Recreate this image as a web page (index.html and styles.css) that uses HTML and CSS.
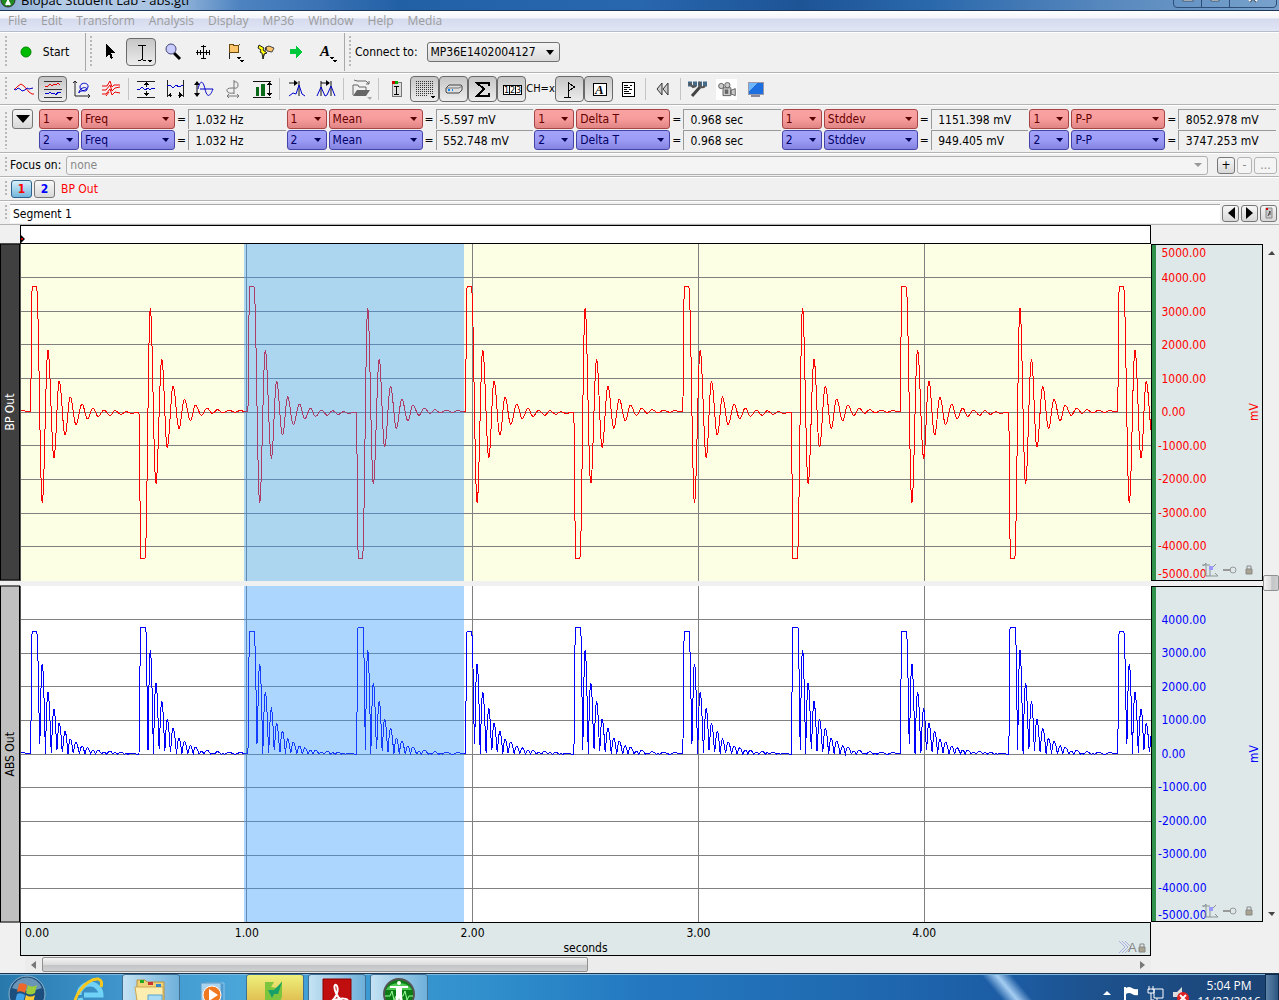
FILE: index.html
```html
<!DOCTYPE html>
<html lang="en">
<head>
    <meta charset="UTF-8">
    <meta name="viewport" content="width=device-width, initial-scale=1.0">
    <title>Biopac Student Lab - abs.gtl</title>
    <link rel="stylesheet" href="styles.css">
</head>
<body>
    <header class="titlebar">
        <svg class="app-icon" width="16" height="16" viewBox="0 0 16 16"><circle cx="8" cy="8" r="7" fill="#1f8a1f" stroke="#333"/><path d="M8 3v10M4 6h8M6 13l2-4 2 4" stroke="#fff" stroke-width="2" fill="none"/></svg>
        <span class="title">Biopac Student Lab - abs.gtl</span>
        <div class="window-buttons">
            <button aria-label="Minimize"><svg width="12" height="12"><rect x="1" y="7" width="10" height="3" fill="#fff" stroke="#456"/></svg></button>
            <button aria-label="Restore"><svg width="12" height="12"><path d="M1 4h8v6H1zM4 4V1h7v6H9" fill="#fff" stroke="#456"/></svg></button>
            <button class="close" aria-label="Close"><svg width="12" height="12"><path d="M2 10l8-8M2 2l8 8" stroke="#456" stroke-width="4"/><path d="M2 10l8-8M2 2l8 8" stroke="#fff" stroke-width="2"/></svg></button>
        </div>
    </header>

    <nav class="menubar">
        <button>File</button>
        <button>Edit</button>
        <button>Transform</button>
        <button>Analysis</button>
        <button>Display</button>
        <button>MP36</button>
        <button>Window</button>
        <button>Help</button>
        <button>Media</button>
    </nav>

    <div class="bar bar-main">
        <span class="grip"></span>
        <button class="start"><svg width="12" height="12"><circle cx="6" cy="6" r="5" fill="#0b0" stroke="#080"/></svg>Start</button>
        <span class="divider"></span>
        <span class="grip"></span>
        <div class="tools">
            <button aria-label="Select"><svg viewBox="0 0 24 24"><path d="M8 4v13l3-3 2 5 2-1-2-5h4z" fill="#000"/></svg></button>
            <button class="on" aria-label="I-beam"><svg viewBox="0 0 24 24"><path d="M9 5h3l1 1 1-1h3M13 6v13M9 20h3l1-1 1 1h3" fill="none" stroke="#000"/><path d="M18 20h5l-2 3z"/></svg></button>
            <button aria-label="Zoom"><svg class="smooth" viewBox="0 0 24 24"><path d="M14 13l6 6" stroke="#000" stroke-width="3"/><circle cx="11" cy="9" r="5" fill="#c8ccff" stroke="#447"/></svg></button>
            <button aria-label="Move"><svg viewBox="0 0 24 24"><path d="M12 5v14M5 12h14M10 6h5M10 18h5M6 10v5M18 10v5M9 10v5M15 10v5" fill="none" stroke="#000"/></svg></button>
            <button aria-label="Event"><svg viewBox="0 0 24 24"><path d="M7 5v14" stroke="#222"/><path d="M7 5l3-1 3 2 4-1-1 8-4-1-3 1-2-1z" fill="#ffc56b" stroke="#6b4a10"/><path d="M14 17h5l-2 3zM17 20h5l-2 3z"/></svg></button>
            <button aria-label="Stimulus event"><svg class="smooth" viewBox="0 0 24 24"><path d="M13 7l3-1 5 2-2 4-5-1z" fill="#ffc56b" stroke="#444"/><path d="M13 7l-3 12" stroke="#222"/><path d="M6 5l5 3-1 2 4 3-3 1-1 5-1-6-2-1 1-2-3-2z" fill="#ff0" stroke="#222"/></svg></button>
            <button aria-label="Next"><svg viewBox="0 0 24 24"><path d="M6 9h6V6l6 6-6 6v-4H6z" fill="#00c83c"/></svg></button>
            <button aria-label="Annotation"><svg viewBox="0 0 24 24"><text x="5" y="16" class="glyph-a">A</text><path d="M14 17h5l-2 3zM17 20h5l-2 3z"/></svg></button>
        </div>
        <span class="divider"></span>
        <span class="grip"></span>
        <label for="device">Connect to:</label>
        <select id="device" class="device"><option>MP36E1402004127</option></select>
    </div>

    <div class="bar bar-icons">
        <span class="grip"></span>
        <div class="tools small">
            <button aria-label="Scope"><svg class="smooth" viewBox="0 0 24 24"><path d="M2 13l4-4 3-2 3 2 5 6 3 2h2" fill="none" stroke="#e00"/><path d="M2 12l2 1 2-2 2 1 2 2 3-1 2-2 2 1 4-1" fill="none" stroke="#00c"/></svg></button>
            <button class="on" aria-label="Chart"><svg viewBox="0 0 24 24"><path d="M3 4h18M3 12h18M3 20h18" stroke="#333"/><path d="M4 9h3l2-2 2 2 2-2 2 1 2-2 2 2" fill="none" stroke="#e00"/><path d="M4 16l3 1 2-2 2 2 2-1 2 2 2-3 3 1" fill="none" stroke="#00c"/></svg></button>
            <button aria-label="X Y plot"><svg class="smooth" viewBox="0 0 24 24"><path d="M5 4v15h15M3 6l2-2 2 2M18 17l2 2-2 2" fill="none" stroke="#222"/><path d="M9 16c-1-3 8-1 9-6s-8-5-8 0 8 5 7 2-8-1-8 4z" fill="none" stroke="#00c"/></svg></button>
            <button aria-label="Overlap"><svg class="smooth" viewBox="0 0 24 24"><path d="M3 9h5l3-5 2 6 2-2h6M3 13h4l4-5 2 6 3-3 5-1M3 17h4l4-5 2 6 3-3 5 1M7 19l3-4" fill="none" stroke="#e00"/></svg></button>
            <span class="sep"></span>
            <button aria-label="Autoscale vertical"><svg viewBox="0 0 24 24"><path d="M3 4h18M3 20h18M12 5v5M12 14v5" stroke="#222"/><path d="M10 8l2-3 3 3zM10 16l2 3 3-3z"/><path d="M3 12h3l2-2 3 3 3-2 2 2 2-2 3 1" fill="none" stroke="#00c"/></svg></button>
            <button aria-label="Autoscale horizontal"><svg viewBox="0 0 24 24"><path d="M4 3v17M20 3v17M4 18h5M15 18h5" stroke="#222"/><path d="M8 15v6l-3-3zM16 15v6l3-3z"/><path d="M4 9l3-1 3 3 3-3 3 2 4-2" fill="none" stroke="#00c"/></svg></button>
            <button aria-label="Center waveform"><svg class="smooth" viewBox="0 0 24 24"><path d="M5 6v12" stroke="#000"/><path d="M2 8l3-4 3 4zM2 16l3 4 3-4z"/><path d="M6 12c2-9 5-9 7 0s5 8 8 0M8 12h13" fill="none" stroke="#00c"/></svg></button>
            <button aria-label="Adjust baseline"><svg class="smooth" viewBox="0 0 24 24"><path d="M13 3v14M13 5q4-1 4 3t-4 3h-2q-6 0-5 3t7 2M6 19h12M8 17l-2 2 2 2M16 17l2 2-2 2" fill="none" stroke="#777"/></svg></button>
            <button aria-label="Match scales"><svg viewBox="0 0 24 24"><path d="M3 4h18M3 20h18M19 6v12" stroke="#111"/><path d="M6 10h3v9H6zM11 7h4v12h-4z" fill="#086a18"/><path d="M17 8l2-3 3 3zM17 16l2 3 3-3z"/></svg></button>
            <span class="sep"></span>
            <button aria-label="Find peak"><svg class="smooth" viewBox="0 0 24 24"><path d="M4 6h8M14 4v15" stroke="#111"/><path d="M9 3l4 3-4 3z"/><path d="M4 19l4-3 3 1 3-9 3 9 3 2" fill="none" stroke="#00c"/></svg></button>
            <button aria-label="Find next peak"><svg class="smooth" viewBox="0 0 24 24"><path d="M7 6h8M17 4v15M7 4v15" stroke="#111"/><path d="M12 3l4 3-4 3z"/><path d="M3 19l4-9 4 9 2-1 4-9 4 10" fill="none" stroke="#00c"/></svg></button>
            <span class="sep"></span>
            <button aria-label="Open"><svg class="smooth" viewBox="0 0 24 24"><path d="M4 18V8h5l1 2h7v3M5 3l3 1M8 4h9l3 3M17 7h3V4" fill="none" stroke="#666"/><path d="M4 19l4-6h13l-4 6z" fill="#666"/><path d="M18 20h5l-2 3z" fill="#aaa"/></svg></button>
            <span class="sep"></span>
            <button aria-label="Journal"><svg viewBox="0 0 24 24"><path d="M8 5h9v14H8z" fill="#ddd" stroke="#777"/><path d="M8 4h3v3H8z" fill="#c00"/><path d="M11 4h3v3h-3z" fill="#0a0"/><path d="M10 9h5M12 9v8M10 17h5" stroke="#000"/></svg></button>
            <button class="on" aria-label="Grid"><svg viewBox="0 0 24 24"><path d="M3 4h17M3 6h17M3 8h17M3 10h17M3 12h17M3 14h17M3 16h17M3 18h12" stroke="#333" stroke-dasharray="1 1"/><path d="M17 19h5l-2 3z"/></svg></button>
            <button class="on" aria-label="Hardware"><svg class="smooth" viewBox="0 0 24 24"><path d="M4 11l3-3h12l1 1v4l-3 3H5l-1-1z" fill="#ddd" stroke="#444"/><path d="M4 11h13l3-2" fill="none" stroke="#777"/><path d="M6 13h2M10 13h1" stroke="#08f" stroke-width="2"/></svg></button>
            <button class="on" aria-label="Measurements"><svg viewBox="0 0 24 24"><path d="M18 9V6H6l7 6-7 7h12v-3" fill="none" stroke="#000" stroke-width="2"/></svg></button>
            <button class="on" aria-label="Channel buttons"><svg viewBox="0 0 24 24"><path d="M3 8h18v9H3zM9 8v9M15 8v9" fill="#fff" stroke="#000"/><text x="4" y="16" class="glyph-n">1</text><text x="10" y="16" class="glyph-n">2</text><text x="16" y="16" class="glyph-n">3</text></svg></button>
            <button class="chx">CH=x</button>
            <button class="on" aria-label="Events"><svg viewBox="0 0 24 24"><path d="M10 5v15M6 20h7M10 6l7 4-7 4" fill="none" stroke="#000"/></svg></button>
            <button class="on" aria-label="Text"><svg viewBox="0 0 24 24"><path d="M6 6h13v12H6z" fill="#fff" stroke="#000"/><text x="8" y="17" class="glyph-box">A</text></svg></button>
            <button aria-label="Report"><svg viewBox="0 0 24 24"><path d="M6 5h12v14H6z" fill="#fff" stroke="#000"/><path d="M8 8h4M8 10h6M8 12h3M8 14h5M8 16h7M14 8h2M13 12h3" stroke="#000"/></svg></button>
            <span class="sep"></span>
            <button aria-label="Rewind"><svg class="smooth" viewBox="0 0 24 24"><path d="M11 6v12l-5-6zM17 6v12l-5-6z" fill="#ccc" stroke="#333"/></svg></button>
            <span class="sep"></span>
            <button aria-label="Tools"><svg class="smooth" viewBox="0 0 24 24"><path d="M2 7h20" stroke="#456a88" stroke-width="5" stroke-dasharray="4 1"/><path d="M6 19l8-9" fill="none" stroke="#444" stroke-width="3"/><path d="M3 6l4 4 3-1M14 5c-2 4 2 7 5 4" fill="none" stroke="#555" stroke-width="2"/></svg></button>
            <button class="white" aria-label="Camera"><svg class="smooth" viewBox="0 0 24 24"><path d="M8 10h9v9H8zM17 13l5-2v8l-5-2z" fill="#ccc" stroke="#555"/><circle cx="6" cy="8" r="3" fill="#ccc" stroke="#555"/><circle cx="13" cy="7" r="3" fill="#ccc" stroke="#555"/><path d="M10 12h4v5h-4z" fill="#666"/></svg></button>
            <button aria-label="Monitor"><svg viewBox="0 0 24 24"><path d="M4 5h15v12H4z" fill="#1d6fe0" stroke="#99a"/><path d="M5 6h9l-9 8z" fill="#6db6ff"/><path d="M7 19h9" stroke="#889" stroke-width="2"/></svg></button>
        </div>
    </div>

    <div class="bar bar-measure">
        <span class="grip"></span>
        <button class="expand" aria-label="Measurement rows"><svg width="14" height="8"><path d="M0 0h14L7 8z"/></svg></button>
        <div class="measures">
            <div class="measure red"><select class="ch" aria-label="Channel"><option>1</option></select><select class="fn" aria-label="Function"><option>Freq</option></select><span>=</span><output>&nbsp;1.032 Hz</output></div>
            <div class="measure red"><select class="ch" aria-label="Channel"><option>1</option></select><select class="fn" aria-label="Function"><option>Mean</option></select><span>=</span><output>-5.597 mV</output></div>
            <div class="measure red"><select class="ch" aria-label="Channel"><option>1</option></select><select class="fn" aria-label="Function"><option>Delta T</option></select><span>=</span><output>&nbsp;0.968 sec</output></div>
            <div class="measure red"><select class="ch" aria-label="Channel"><option>1</option></select><select class="fn" aria-label="Function"><option>Stddev</option></select><span>=</span><output>&nbsp;1151.398 mV</output></div>
            <div class="measure red"><select class="ch" aria-label="Channel"><option>1</option></select><select class="fn" aria-label="Function"><option>P-P</option></select><span>=</span><output>&nbsp;8052.978 mV</output></div>
            <div class="measure blue"><select class="ch" aria-label="Channel"><option>2</option></select><select class="fn" aria-label="Function"><option>Freq</option></select><span>=</span><output>&nbsp;1.032 Hz</output></div>
            <div class="measure blue"><select class="ch" aria-label="Channel"><option>2</option></select><select class="fn" aria-label="Function"><option>Mean</option></select><span>=</span><output>&nbsp;552.748 mV</output></div>
            <div class="measure blue"><select class="ch" aria-label="Channel"><option>2</option></select><select class="fn" aria-label="Function"><option>Delta T</option></select><span>=</span><output>&nbsp;0.968 sec</output></div>
            <div class="measure blue"><select class="ch" aria-label="Channel"><option>2</option></select><select class="fn" aria-label="Function"><option>Stddev</option></select><span>=</span><output>&nbsp;949.405 mV</output></div>
            <div class="measure blue"><select class="ch" aria-label="Channel"><option>2</option></select><select class="fn" aria-label="Function"><option>P-P</option></select><span>=</span><output>&nbsp;3747.253 mV</output></div>
        </div>
    </div>

    <div class="bar bar-focus">
        <span class="grip"></span>
        <label for="focus">Focus on:</label>
        <select id="focus" class="focus" disabled><option>none</option></select>
        <button class="mini">+</button>
        <button class="mini" disabled>-</button>
        <button class="mini wide" disabled>...</button>
    </div>

    <div class="bar bar-channels">
        <span class="grip"></span>
        <button class="channel active">1</button>
        <button class="channel">2</button>
        <span class="channel-name">BP Out</span>
    </div>

    <div class="bar bar-segment">
        <span class="grip"></span>
        <input type="text" class="segment" value="Segment 1" aria-label="Segment label">
        <button class="mini" aria-label="Previous segment"><svg width="8" height="12"><path d="M8 0v12L1 6z"/></svg></button>
        <button class="mini" aria-label="Next segment"><svg width="8" height="12"><path d="M0 0v12l7-6z"/></svg></button>
        <button class="mini" aria-label="Segment journal"><svg width="8" height="12"><path d="M1 1h6v10H1z" fill="#ccc" stroke="#888"/><path d="M1 1h2v2H1z" fill="#c00"/><path d="M3 9l2-5v4" fill="none" stroke="#444"/></svg></button>
    </div>

    <main class="graph">
        <div class="panes">
            <div class="markers"><svg width="4" height="8"><path d="M0 0l4 4-4 4z"/><path d="M0 3h2v2H0z" fill="#c00"/></svg></div>

            <section class="pane pane-bp">
                <h2 class="pane-name">BP Out</h2>
                <svg class="plot" id="bpPlot" viewBox="0 0 5000 10000" preserveAspectRatio="none"></svg>
                <div class="scale">
                    <ul>
                        <li>&nbsp;5000.00</li><li>&nbsp;4000.00</li><li>&nbsp;3000.00</li><li>&nbsp;2000.00</li><li>&nbsp;1000.00</li><li>&nbsp;0.00</li>
                        <li>-1000.00</li><li>-2000.00</li><li>-3000.00</li><li>-4000.00</li><li>-5000.00</li>
                    </ul>
                    <span class="unit">mV</span>
                    <svg class="scale-icons" width="56" height="16"><path d="M5 1v13h12M2 4l3-3M14 11l3 3M1 3h8M9 8l6-6M9 8v6" fill="none" stroke="#8a9494"/><path d="M8 4h4v4H8z" fill="#99f"/><path d="M22 8h8" stroke="#999" stroke-width="2"/><circle cx="32" cy="8" r="3" fill="none" stroke="#999"/><path d="M45 7h6v5h-6z" fill="#a8a490" stroke="#888"/><path d="M46 7V4h4v3" fill="none" stroke="#888"/></svg>
                </div>
            </section>

            <section class="pane pane-abs">
                <h2 class="pane-name">ABS Out</h2>
                <svg class="plot" id="absPlot" viewBox="0 0 5000 10000" preserveAspectRatio="none"></svg>
                <div class="scale">
                    <ul>
                        <li></li><li>&nbsp;4000.00</li><li>&nbsp;3000.00</li><li>&nbsp;2000.00</li><li>&nbsp;1000.00</li><li>&nbsp;0.00</li>
                        <li>-1000.00</li><li>-2000.00</li><li>-3000.00</li><li>-4000.00</li><li>-5000.00</li>
                    </ul>
                    <span class="unit">mV</span>
                    <svg class="scale-icons" width="56" height="16"><path d="M5 1v13h12M2 4l3-3M14 11l3 3M1 3h8M9 8l6-6M9 8v6" fill="none" stroke="#8a9494"/><path d="M8 4h4v4H8z" fill="#99f"/><path d="M22 8h8" stroke="#999" stroke-width="2"/><circle cx="32" cy="8" r="3" fill="none" stroke="#999"/><path d="M45 7h6v5h-6z" fill="#a8a490" stroke="#888"/><path d="M46 7V4h4v3" fill="none" stroke="#888"/></svg>
                </div>
            </section>

            <div class="time-axis">
                <div class="ticks"><span>0.00</span><span>1.00</span><span>2.00</span><span>3.00</span><span>4.00</span></div>
                <div class="time-unit">seconds</div>
                <svg class="axis-icons" width="30" height="16"><path d="M1 2l6 6-6 6M4 2l6 6-6 6M7 2l6 6-6 6" fill="none" stroke="#aab0dd"/><path d="M21 8h6v5h-6z" fill="#a8a490" stroke="#888"/><path d="M22 8V5h4v3" fill="none" stroke="#888"/><text x="10" y="13" class="glyph-axis">A</text></svg>
            </div>

            <div class="hscroll">
                <button aria-label="Scroll left"><svg width="5" height="8"><path d="M5 0v8L0 4z" fill="#777"/></svg></button>
                <div class="track"><div class="thumb"></div></div>
                <button aria-label="Scroll right"><svg width="5" height="8"><path d="M0 0v8l5-4z" fill="#777"/></svg></button>
            </div>
        </div>
        <div class="vscroll">
            <button aria-label="Scroll up"><svg width="7" height="4"><path d="M0 4h7L4 0z" fill="#444"/></svg></button>
            <div class="thumb"></div>
            <button aria-label="Scroll down"><svg width="7" height="4"><path d="M0 0h7L4 4z" fill="#444"/></svg></button>
        </div>
    </main>

    <footer class="taskbar">
        <button class="orb" aria-label="Start menu"><svg width="38" height="38" viewBox="0 0 38 38"><circle cx="19" cy="19" r="18" fill="#1c4f7d" stroke="#8fb4cc"/><path d="M4 13a16 16 0 0 1 30 0q-15 6-30 0" fill="#8db4cf" opacity=".7"/><path d="M11 9q4-2 8 1l-2 8q-4-3-8-1z" fill="#f0672a"/><path d="M20 10q4 3 9 0l-2 8q-5 3-9 0z" fill="#9ccb3b"/><path d="M9 19q4-2 8 1l-2 8q-4-3-8-1z" fill="#3fa2e8"/><path d="M18 20q4 3 9 0l-2 8q-5 3-9 0z" fill="#fbca30"/></svg></button>
        <button class="task" aria-label="Internet Explorer"><svg width="34" height="34" viewBox="0 0 34 34"><path d="M7 19a11 11 0 0 1 22 0H12M8 22q2 8 10 8 7 0 10-5" fill="none" stroke="#6fd2f6" stroke-width="5"/><path d="M4 32C-2 24 14 2 26 3q5 1 3 8" fill="none" stroke="#f8c81c" stroke-width="3"/></svg></button>
        <button class="task open" aria-label="Windows Explorer"><svg width="34" height="34" viewBox="0 0 34 34"><path d="M3 8V4h8l2 2h17v24H3z" fill="#f0d27a" stroke="#b8933c"/><path d="M1 11h28v20H4z" fill="#fbeeb0" stroke="#cda84e"/><path d="M6 4h4v3H6z" fill="#2a2"/><path d="M14 6h5v3h-5z" fill="#c33"/><path d="M22 8h5v3h-5z" fill="#38c"/><path d="M14 19h14v13H14z" fill="#a8dcf4" stroke="#5ba3cc"/></svg></button>
        <button class="task" aria-label="Media Player"><svg width="34" height="34" viewBox="0 0 34 34"><path d="M10 7h18v26H10z" fill="#4c9cd4" stroke="#8cc4e8"/><path d="M5 7h20v26H5z" fill="#aad3ee" stroke="#5b9cc8"/><circle cx="16" cy="19" r="9" fill="#f07820" stroke="#fff"/><path d="M13 13l9 6-9 6z" fill="#fff"/></svg></button>
        <button class="task yellow" aria-label="Launcher"><svg width="34" height="34" viewBox="0 0 34 34"><path d="M7 6h9l-3 5 6 1 5-7v15q-1 7-8 7H7z" fill="#7cc53c"/><path d="M10 14h6l8-8-4 12h-4l-2 4z" fill="#17a068"/></svg></button>
        <button class="task open" aria-label="Adobe Reader"><svg width="34" height="34" viewBox="0 0 34 34"><path d="M3 3h28v31H3z" fill="#c00d0d" stroke="#800"/><path d="M8 27c8-3 11-12 9-17-2-3-4 0-1 7s8 10 11 8-6-5-18 2" fill="none" stroke="#fff" stroke-width="2"/></svg></button>
        <button class="task open" aria-label="Biopac Student Lab"><svg width="34" height="34" viewBox="0 0 34 34"><circle cx="17" cy="18" r="15" fill="#0c7c16" stroke="#555" stroke-width="2"/><path d="M4 14a14 11 0 0 1 26 0z" fill="#4cc950"/><path d="M3 20h5l2-5 2 9 2-4h7l2-5 2 9 2-4h4" fill="none" stroke="#9f9"/><circle cx="17" cy="7" r="2" fill="#fff"/><path d="M8 10h18v2h-6v8l2 12h-3l-2-10-2 10h-3l2-12v-8H8z" fill="#fff"/></svg></button>
        <div class="tray">
            <svg width="90" height="20" viewBox="0 0 90 20"><path d="M0 10h8L4 6z" fill="#fff"/><path d="M22 2v17" stroke="#fff" stroke-width="2"/><path d="M23 3q3-2 6 0t6 1v6q-3 1-6-1t-6 0z" fill="#fff"/><path d="M51 4h9v9h-9zM50 17h8M54 13v4M46 1v4M50 1v4M45 4h6v4h-6zM48 8v7h3" fill="none" stroke="#fff"/><path d="M70 7h4l5-5v15l-5-5h-4z" fill="#ddd"/><circle cx="80" cy="13" r="6" fill="#d22"/><path d="M77 10l6 6M83 10l-6 6" stroke="#fff" stroke-width="2"/></svg>
            <div class="clock">5:04 PM<br>11/22/2016</div>
        </div>
        <button class="show-desktop" aria-label="Show desktop"></button>
    </footer>

    <script src="script.js"></script>
</body>
</html>
```
FILE: styles.css
```css
* {
    box-sizing: border-box;
}
body {
    margin: 0;
    height: 100vh;
    display: flex;
    flex-direction: column;
    overflow: hidden;
    background-color: #f0f0f0;
    color: #000;
    font-family: "DejaVu Sans Condensed", "DejaVu Sans", sans-serif;
    font-size: 12px;
    line-height: 16px;
}
button, select, input {
    font: inherit;
    color: inherit;
    margin: 0;
    padding: 0;
    border: none;
    background: none;
}
button {
    display: flex;
    align-items: center;
    justify-content: center;
    flex: none;
}
svg {
    display: block;
}
select {
    appearance: none;
    border-radius: 3px;
}

/* Title bar and menu */
.titlebar {
    flex: 0 0 11px;
    display: flex;
    align-items: flex-end;
    overflow: hidden;
    padding-bottom: 2px;
    border-bottom: 1px solid #1d3557;
    background: linear-gradient(to right, #86a9d0 0, #b4cbe6 60px, #a9c4e2 160px, #4d83c0 240px, #3a72b4 320px, #2260a6 400px, #2866ae 640px, #1d5496 800px, #2a68ac 930px, #5687bd 1100px, #78a2cc 100%);
}
.app-icon {
    flex: none;
}
.title {
    font-family: "Open Sans", sans-serif;
    font-size: 13px;
    margin-left: 5px;
}
.window-buttons {
    margin-left: auto;
    margin-right: 2px;
    display: flex;
    border: 1px solid #2d4e78;
    border-radius: 0 0 4px 4px;
}
.window-buttons button {
    width: 28px;
    height: 18px;
    align-items: flex-end;
    padding-bottom: 4px;
    border-right: 1px solid #2d4e78;
}
.window-buttons .close {
    width: 46px;
    border-right: none;
}
.menubar {
    flex: 0 0 21px;
    display: flex;
    gap: 14px;
    padding-left: 8px;
    background: linear-gradient(#fff 0, #f3f5fb 7px, #d5dbee 8px, #e1e6f5 20px);
    border-bottom: 1px solid #b6bccc;
    color: #9c9c9c;
    font-family: "Open Sans", sans-serif;
}

/* Toolbars */
.bar {
    flex: none;
    display: flex;
    align-items: center;
    padding: 0 2px 0 5px;
    border-top: 1px solid #fff;
    border-bottom: 1px solid #b4b4b4;
}
.grip {
    flex: none;
    width: 2px;
    align-self: stretch;
    margin: 3px 0;
    background: repeating-linear-gradient(#b8b8b8 0, #b8b8b8 2px, transparent 2px, transparent 4px);
}
.divider {
    width: 1px;
    align-self: stretch;
    margin-right: 4px;
    background: #a8a8a8;
}
.bar-main {
    height: 41px;
    padding-bottom: 1px;
}
.bar-icons {
    height: 32px;
}
.start {
    gap: 11px;
    width: 78px;
    padding-right: 3px;
}
.tools {
    display: flex;
    align-items: center;
    gap: 1px;
    padding: 0 2px 0 3px;
}
.tools button {
    width: 30px;
    height: 28px;
    border-radius: 4px;
}
.tools svg {
    width: 24px;
    height: 24px;
    shape-rendering: crispEdges;
}
.tools .smooth {
    shape-rendering: auto;
}
.tools .on {
    border: 1px solid #6a6a6a;
    background: linear-gradient(#c6c6c6, #ececec);
}
.tools.small {
    gap: 0;
    padding-left: 2px;
}
.tools.small button {
    width: 29px;
    height: 26px;
}
.tools .white svg {
    background: #fff;
    width: 21px;
    height: 21px;
}
.tools .chx {
    font-size: 11px;
}
.sep {
    width: 1px;
    height: 22px;
    margin: 0 2px 0 3px;
    background: #c4c4c4;
}
.glyph-a {
    font: italic bold 15px "Liberation Serif", serif;
}
.glyph-box {
    font: italic bold 13px "Liberation Serif", serif;
}
.glyph-n {
    font: 8px "DejaVu Sans", sans-serif;
}
.glyph-axis {
    font: 13px "Liberation Sans", sans-serif;
    fill: #888;
}
.bar-main label {
    margin: 0 9px 0 4px;
}
.device {
    width: 133px;
    height: 20px;
    padding-left: 3px;
    border: 1px solid #707070;
    background: url("data:image/svg+xml,%3Csvg xmlns='http://www.w3.org/2000/svg' width='8' height='5'%3E%3Cpath d='M0 0h8L4 5z'/%3E%3C/svg%3E") no-repeat right 5px center, linear-gradient(#f4f4f4, #dadada);
}

/* Measurements */
.bar-measure {
    height: 48px;
    align-items: flex-start;
    padding-top: 3px;
}
.expand {
    width: 21px;
    height: 20px;
    margin: 0 6px 0 5px;
    border: 1px solid #777;
    border-radius: 3px;
    background: linear-gradient(#f6f6f6, #d8d8d8);
}
.measures {
    flex: 1;
    display: grid;
    grid-template-columns: repeat(5, 1fr);
    row-gap: 1px;
}
.measure {
    display: flex;
    align-items: center;
    height: 20px;
}
.measure select {
    height: 20px;
    padding-left: 3px;
}
.measure .ch {
    width: 40px;
    margin-right: 2px;
}
.measure .fn {
    width: 94px;
}
.measure span {
    width: 13px;
    text-align: center;
}
.measure output {
    flex: 1;
    height: 20px;
    padding: 2px 0 0 3px;
    border-top: 1px solid #999;
    border-left: 1px solid #999;
    margin-right: 1px;
    white-space: nowrap;
}
.red select {
    color: #600;
    border: 1px solid #a84444;
    background: url("data:image/svg+xml,%3Csvg xmlns='http://www.w3.org/2000/svg' width='7' height='4'%3E%3Cpath d='M0 0h7L4 4z' fill='%23500'/%3E%3C/svg%3E") no-repeat right 5px center, linear-gradient(#f9a3a3, #f79c9c 50%, #e08484);
}
.blue select {
    color: #006;
    border: 1px solid #4444a8;
    background: url("data:image/svg+xml,%3Csvg xmlns='http://www.w3.org/2000/svg' width='7' height='4'%3E%3Cpath d='M0 0h7L4 4z' fill='%23005'/%3E%3C/svg%3E") no-repeat right 5px center, linear-gradient(#a3a3f9, #9c9cf7 50%, #8484e0);
}

/* Focus, channel and segment rows */
.bar-focus, .bar-channels, .bar-segment {
    height: 24px;
}
.bar-focus label {
    margin: 0 5px 0 3px;
}
.focus {
    flex: 1;
    height: 19px;
    margin-right: 9px;
    padding-left: 3px;
    border: 1px solid #b0b0b0;
    color: #888;
    opacity: 1;
    background: url("data:image/svg+xml,%3Csvg xmlns='http://www.w3.org/2000/svg' width='8' height='4'%3E%3Cpath d='M0 0h8L4 4z' fill='%23999'/%3E%3C/svg%3E") no-repeat right 5px center, #f4f4f4;
}
.mini {
    width: 17px;
    height: 17px;
    margin-right: 2px;
    border: 1px solid #777;
    border-radius: 3px;
    background: linear-gradient(#f6f6f6, #d8d8d8);
}
.mini:last-child {
    margin-right: 0;
}
.bar-focus .mini {
    width: 18px;
}
.bar-focus .mini:disabled {
    width: 15px;
    border-color: #b4b4b4;
    background: #f4f4f4;
    color: #888;
}
.bar-focus .mini.wide:disabled {
    width: 23px;
}
.channel {
    width: 21px;
    height: 18px;
    margin-left: 2px;
    border: 1px solid #777;
    border-radius: 3px;
    background: linear-gradient(#f8f8f8, #d8d8d8);
    color: #00f;
    font-weight: bold;
}
.channel.active {
    margin-left: 4px;
    color: #f00;
    border-color: #2c628b;
    background: linear-gradient(#d6effb, #72b6dc);
}
.channel-name {
    margin-left: 6px;
    color: #f00;
}
.segment {
    flex: 1;
    height: 19px;
    margin: 0 2px 0 3px;
    padding-left: 3px;
    border-top: 1px solid #aaa;
    background: #fff;
}

/* Graph */
.graph {
    flex: 1;
    display: flex;
    min-height: 0;
}
.panes {
    flex: 1;
    min-width: 0;
    display: flex;
    flex-direction: column;
}
.markers {
    flex: 0 0 19px;
    margin: 0 112px 0 20px;
    border: 1px solid #000;
    background: #fff;
    display: flex;
    align-items: flex-end;
}
.pane {
    flex: 1;
    min-height: 0;
    display: flex;
}
.pane-bp {
    margin-bottom: 5px;
}
.pane-name {
    width: 20px;
    margin: 0;
    border: 1px solid #000;
    writing-mode: vertical-rl;
    transform: rotate(180deg);
    text-align: center;
    font-size: 12px;
    font-weight: normal;
    line-height: 18px;
}
.pane-bp .pane-name {
    background: #404040;
    color: #fff;
}
.pane-abs .pane-name {
    background: #c0c0c0;
}
.plot {
    flex: 1;
    min-width: 0;
    height: 100%;
    border-left: 1px solid #555;
    background: #fff;
    overflow: hidden;
    shape-rendering: crispEdges;
}
.pane-bp .plot {
    background: #fdffe5;
}
.plot path {
    fill: none;
    stroke-width: 1px;
    vector-effect: non-scaling-stroke;
}
.plot .gridlines {
    stroke: #808080;
}
.plot .selection {
    fill: rgba(51, 153, 255, 0.4);
}
.pane-bp .wave {
    stroke: #f00;
}
.pane-abs .wave {
    stroke: #00f;
}
.scale {
    width: 112px;
    position: relative;
    display: flex;
    align-items: center;
    border: 1px solid #000;
    background: #dfe8e8;
    color: #f00;
}
.pane-abs .scale {
    color: #00f;
}
.scale ul {
    flex: 1;
    align-self: stretch;
    display: flex;
    flex-direction: column;
    margin: 0;
    padding: 0 0 0 2px;
    list-style: none;
    border-left: 4px solid #30904c;
}
.scale li {
    flex: 2 1 0;
    min-height: 0;
    display: flex;
    align-items: center;
}
.scale li:first-child, .scale li:last-child {
    flex-grow: 1;
}
.scale li:last-child {
    align-items: flex-end;
    line-height: 12px;
}
.unit {
    writing-mode: vertical-rl;
    transform: rotate(180deg);
}
.scale-icons {
    position: absolute;
    right: 5px;
    bottom: 2px;
}
.time-axis {
    flex: 0 0 34px;
    position: relative;
    margin: 0 112px 0 20px;
    border: 1px solid #000;
    background: #dfe8e8;
}
.ticks {
    display: grid;
    grid-template-columns: 1fr 2fr 2fr 2fr 2fr 1fr;
    text-align: center;
    padding-top: 3px;
    line-height: 15px;
}
.ticks span:first-child {
    text-align: left;
    padding-left: 4px;
}
.time-unit {
    text-align: center;
    line-height: 14px;
}
.axis-icons {
    position: absolute;
    right: 2px;
    bottom: 0;
}
.hscroll {
    flex: 0 0 17px;
    display: flex;
    margin: 0 112px 0 25px;
    padding: 1px 0;
    background: #ececec;
}
.hscroll button {
    width: 17px;
}
.hscroll .track {
    flex: 1;
}
.hscroll .thumb {
    width: 50%;
    height: 15px;
    border: 1px solid #909090;
    border-radius: 2px;
    background: linear-gradient(#f4f4f4, #dcdcdc 50%, #c2c4c6 55%, #cfd0d2);
}
.vscroll {
    width: 16px;
    display: flex;
    flex-direction: column;
    justify-content: space-between;
    margin: 19px 0 51px;
}
.vscroll button {
    height: 17px;
    width: 16px;
}
.vscroll .thumb {
    height: 16px;
    border: 1px solid #909090;
    border-radius: 2px;
    background: linear-gradient(to right, #f4f4f4, #dcdcdc 50%, #c2c4c6 55%, #cfd0d2);
}

/* Taskbar */
.taskbar {
    flex: 0 0 27px;
    display: flex;
    align-items: flex-start;
    gap: 4px;
    overflow: hidden;
    border-top: 1px solid #1c3550;
    background:
        linear-gradient(50deg, transparent 44%, #a5cdf2 49%, transparent 54%) 870px 0 / 280px 27px no-repeat,
        linear-gradient(to right, #2878ac 0, #3f96cc 120px, #4aa5d8 240px, #3090cc 480px, #2478c0 640px, #1f69b0 860px, #1c5ca4 1010px, #1d5390 1080px, #1b4272 100%);
    box-shadow: inset 0 1px 0 #7fb6dc;
}
.orb {
    width: 46px;
    margin-left: 4px;
    padding-top: 1px;
}
.task {
    width: 58px;
    height: 40px;
    padding-bottom: 2px;
}
.orb + .task {
    margin-left: 6px;
}
.task.open, .task.yellow {
    border: 1px solid #3f6f92;
    border-radius: 3px;
    background: linear-gradient(to right, #c5e2f3, #6eb0da);
}
.task.yellow {
    background: linear-gradient(#eef07c, #d9a83c);
}
.tray {
    margin-left: auto;
    display: flex;
    gap: 4px;
}
.tray svg {
    margin-top: 11px;
}
.clock {
    width: 64px;
    padding-top: 4px;
    color: #fff;
    font-family: "Open Sans", sans-serif;
    text-align: center;
}
.show-desktop {
    width: 14px;
    height: 40px;
    border: 1px solid #0f2b4c;
    background: linear-gradient(to right, #5d84ab, #2c557f);
}
```
FILE: script.js
```js
// one heart cycle of the BP signal: [ms, mV] turning points
const cycle = [
    [0, 15], [7, 3725], [27, 3725], [52, -2690], [77, 1840], [104, -1350],
    [127, 920], [153, -680], [176, 450], [201, -360], [228, 240], [252, -190],
    [277, 120], [299, -120], [325, 60], [352, -90], [374, 45], [400, -60],
    [423, 15], [445, -30], [480, 0], [488, -4340], [507, -4340], [530, 3100],
    [555, -2120], [581, 1570], [605, -1040], [631, 770], [657, -475],
    [681, 385], [708, -250], [730, 210], [757, -90], [781, 120], [805, -30],
    [827, 75], [852, -15], [878, 60], [905, 0], [927, 45], [958, 15]
];
const period = 962;
const firstBeat = 42;

function bp(t) {
    const p = (((t - firstBeat) % period) + period) % period;
    for (let i = 1; i < cycle.length; i++) {
        const [t0, v0] = cycle[i - 1];
        const [t1, v1] = cycle[i];
        if (p <= t1) {
            const k = (1 - Math.cos(Math.PI * (p - t0) / (t1 - t0))) / 2;
            return v0 + (v1 - v0) * k;
        }
    }
    return 15;
}

// the rectified channel clips a little lower than the input
function abs(t) {
    const v = bp(t);
    return v > 0 ? Math.min(v, 3650) : Math.min(-v, 3770);
}

function drawPlot(id, signal) {
    let grid = '';
    for (let mv = 1000; mv < 10000; mv += 1000) {
        grid += `M0 ${mv}H5000`;
    }
    for (let ms = 1000; ms < 5000; ms += 1000) {
        grid += `M${ms - 3} 0V10000`;
    }
    let wave = '';
    for (let t = 0; t <= 5000; t += 2) {
        wave += (t ? 'L' : 'M') + t + ' ' + Math.round(5000 - signal(t));
    }
    document.getElementById(id).innerHTML =
        `<path class="gridlines" d="${grid}"/>
         <path class="wave" d="${wave}"/>
         <rect class="selection" x="987" y="0" width="973" height="10000"/>`;
}

drawPlot('bpPlot', bp);
drawPlot('absPlot', abs);
```
